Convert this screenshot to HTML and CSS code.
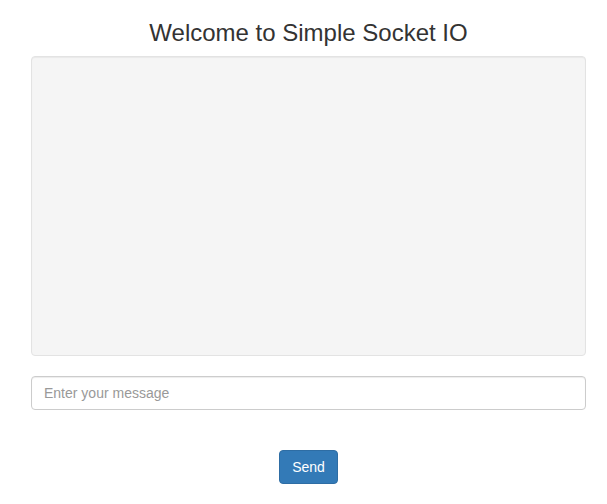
FILE: index.html
```html
<!DOCTYPE html>
<html>
<head>
<meta charset="utf-8">
<link rel="stylesheet" href="styles.css">
</head>
<body>
<div class="container">
  <h3 class="title">Welcome to Simple Socket IO</h3>
  <div class="well"></div>
  <input class="form-control" type="text" placeholder="Enter your message">
  <div class="actions">
    <button class="btn btn-primary" type="button">Send</button>
  </div>
</div>
</body>
</html>
```
FILE: styles.css
```css
* { box-sizing: border-box; }
html, body { margin: 0; padding: 0; }
body {
  font-family: "Liberation Sans", Arial, sans-serif;
  font-size: 14px;
  line-height: 1.42857143;
  color: #333;
  background: #fff;
}
.container {
  margin-left: 31px;
  width: 555px;
}
.title {
  margin: 20px 0 10px;
  font-size: 24px;
  font-weight: 500;
  line-height: 1.1;
  text-align: center;
  color: #333;
}
.well {
  height: 300px;
  background: #f5f5f5;
  border: 1px solid #e3e3e3;
  border-radius: 4px;
  box-shadow: inset 0 1px 1px rgba(0,0,0,.05);
  margin-bottom: 20px;
}
.form-control {
  display: block;
  width: 100%;
  height: 34px;
  padding: 6px 12px;
  font-family: inherit;
  font-size: 14px;
  line-height: 1.42857143;
  color: #555;
  background: #fff;
  border: 1px solid #ccc;
  border-radius: 4px;
  box-shadow: inset 0 1px 1px rgba(0,0,0,.075);
  margin: 0;
  outline: none;
}
.form-control::placeholder { color: #999; opacity: 1; }
.actions {
  display: flex;
  justify-content: center;
  margin-top: 40px;
}
.btn {
  display: inline-block;
  height: 34px;
  padding: 6px 12px;
  font-family: inherit;
  font-size: 14px;
  line-height: 1.42857143;
  border-radius: 4px;
  border: 1px solid transparent;
  cursor: pointer;
}
.btn-primary {
  color: #fff;
  background: #337ab7;
  border-color: #2e6da4;
}
```
